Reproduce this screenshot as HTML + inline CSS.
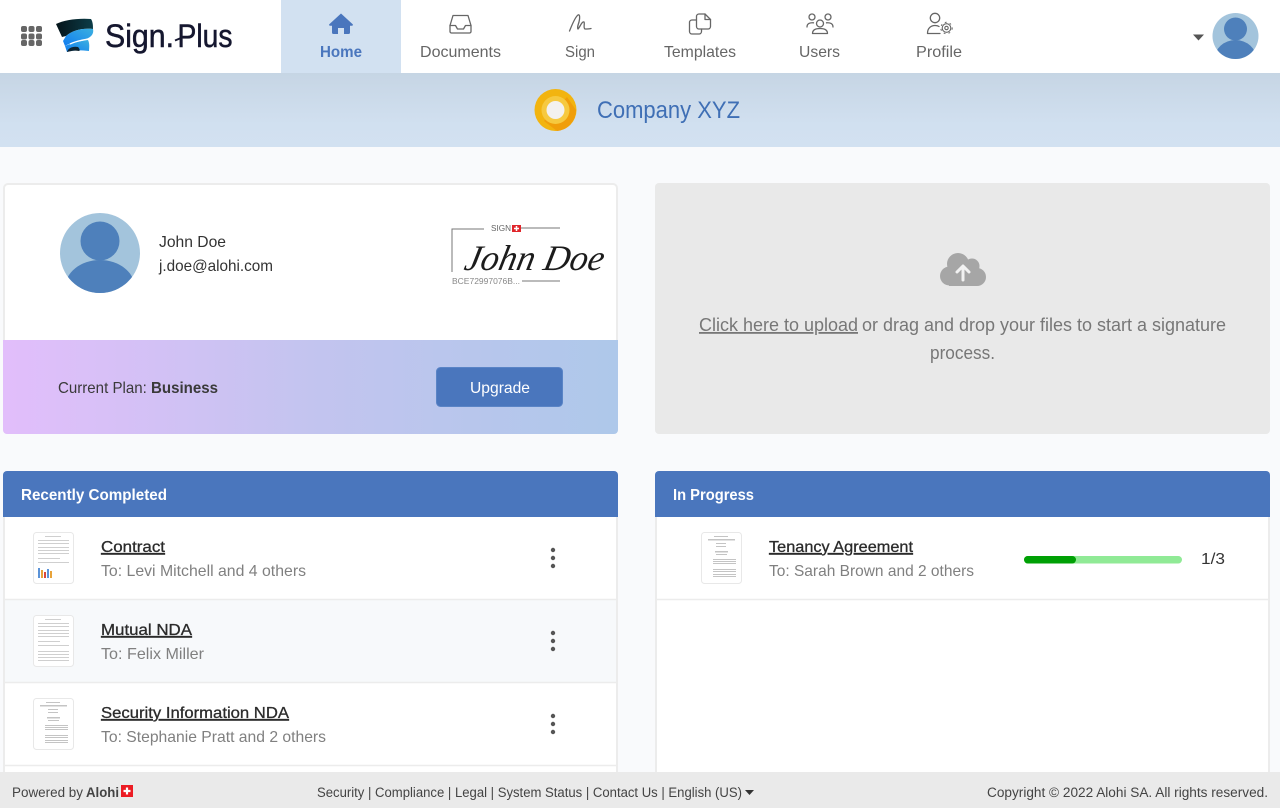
<!DOCTYPE html>
<html><head><meta charset="utf-8"><title>Sign.Plus</title>
<style>
html,body{margin:0;padding:0;background:#f9fafc;width:1280px;height:808px;overflow:hidden}
svg{display:block;font-family:"Liberation Sans",sans-serif}
text{white-space:pre}
.nav{font-size:16px;fill:#666}
.t{font-size:16px;fill:#333}
.s{font-size:16px;fill:#808080}
.l{font-size:16px;fill:#2b2b2b;stroke:#2b2b2b;stroke-width:.3;text-decoration:underline}
.f{font-size:13.5px;fill:#444}
.ic{fill:none;stroke:#666;stroke-width:1.3;stroke-linecap:round;stroke-linejoin:round}
</style></head><body>
<svg width="1280" height="808" viewBox="0 0 1280 808" xmlns="http://www.w3.org/2000/svg">
<defs>
<linearGradient id="band" x1="0" y1="0" x2="0" y2="1"><stop offset="0" stop-color="#c6d5e4"/><stop offset=".7" stop-color="#d1e0f0"/><stop offset="1" stop-color="#d2e1f1"/></linearGradient>
<linearGradient id="plan" x1="0" y1="0" x2="1" y2="0"><stop offset="0" stop-color="#e2befb"/><stop offset=".5" stop-color="#c3c4ef"/><stop offset="1" stop-color="#aec8ea"/></linearGradient>
<linearGradient id="ld" x1="0" y1="0" x2="1" y2="0"><stop offset="0" stop-color="#05141a"/><stop offset="1" stop-color="#0c3d48"/></linearGradient>
<linearGradient id="lb" x1="0" y1="1" x2="1" y2="0"><stop offset="0" stop-color="#0f7cf0"/><stop offset="1" stop-color="#3cb0e0"/></linearGradient>
<clipPath id="av"><circle cx="100" cy="253" r="40"/></clipPath>
<clipPath id="av2"><circle cx="1235.5" cy="36" r="23"/></clipPath>
<g id="thumb">
<rect x=".5" y=".5" width="40" height="51" rx="3" fill="#fff" stroke="#e8e8e8"/>
<g fill="#cfcfcf"><rect x="12" y="4" width="16" height="1"/><rect x="5" y="8" width="31" height="1"/><rect x="5" y="11" width="31" height="1"/><rect x="5" y="15" width="31" height="1"/><rect x="5" y="18" width="31" height="1"/><rect x="5" y="21" width="31" height="1"/><rect x="5" y="26" width="22" height="1"/><rect x="5" y="30" width="31" height="1"/></g>
</g>
<g id="thumb2">
<rect x=".5" y=".5" width="40" height="51" rx="3" fill="#fff" stroke="#e8e8e8"/>
<g fill="#c4c4c4"><rect x="13" y="4" width="14" height="1"/><rect x="7" y="7" width="27" height="1.5"/><rect x="15" y="11" width="10" height="1"/><rect x="15" y="14" width="10" height="1"/><rect x="14" y="19" width="13" height="1.5"/><rect x="15" y="22" width="11" height="1"/><rect x="12" y="27" width="23" height="1"/><rect x="12" y="29" width="23" height="1"/><rect x="12" y="31" width="23" height="1"/><rect x="12" y="37" width="23" height="1"/><rect x="12" y="39" width="23" height="1"/><rect x="12" y="42" width="23" height="1"/><rect x="12" y="44" width="23" height="1"/></g>
</g>
</defs>

<rect width="1280" height="808" fill="#f9fafc"/>
<!-- header -->
<rect width="1280" height="73" fill="#fff"/>
<rect x="281" width="120" height="73" fill="#d2e1f1"/>
<rect y="73" width="1280" height="74" fill="url(#band)"/>

<!-- grid icon -->
<g fill="#666"><rect x="21" y="26" width="6" height="6" rx="2"/><rect x="28.5" y="26" width="6" height="6" rx="2"/><rect x="36" y="26" width="6" height="6" rx="2"/><rect x="21" y="33.5" width="6" height="6" rx="2"/><rect x="28.5" y="33.5" width="6" height="6" rx="2"/><rect x="36" y="33.5" width="6" height="6" rx="2"/><rect x="21" y="40" width="6" height="6" rx="2"/><rect x="28.5" y="40" width="6" height="6" rx="2"/><rect x="36" y="40" width="6" height="6" rx="2"/></g>
<!-- logo -->
<path d="M56 24C64 20 78 18 91 19C93 22 93 26 93 29C82 28 73 30 66 36L62 37Z" fill="url(#ld)"/>
<path d="M66 36C73 30 82 28 93 29C94 33 92 37 86 39C78 41 70 43 65 46L63 41Z" fill="url(#lb)"/>
<path d="M65 46C72 43 80 41 88 40C90 44 89 48 89 51C80 50 73 50 67 52Z" fill="url(#lb)"/>
<path d="M67 52C68 48 73 46 78 47C80 49 80 51 79 51C74 50 71 51 67 52Z" fill="#0d2430"/>
<path d="M70 44C76 41 82 40 88 39" fill="none" stroke="#fff" stroke-width="1.300"/>
<text x="105" y="47" font-size="32" fill="#15172f" stroke="#15172f" stroke-width=".5" textLength="69" lengthAdjust="spacingAndGlyphs">Sign.</text>
<text x="177.500" y="47" font-size="32" fill="#15172f" stroke="#15172f" stroke-width=".5" textLength="55" lengthAdjust="spacingAndGlyphs">Plus</text>
<path d="M175 40.500L181 38" stroke="#15172f" stroke-width="2" fill="none"/>

<!-- nav icons -->
<path d="M341 13.5L329.3 24.2a.9.9 0 0 0 .6 1.5H332V32.5a1.5 1.5 0 0 0 1.5 1.5H338V28h6v6h4.5a1.5 1.5 0 0 0 1.5-1.5V25.7h2.1a.9.9 0 0 0 .6-1.5Z" fill="#4a76bd"/>
<text x="320" y="57" font-size="16" font-weight="bold" fill="#4a76bd" textLength="42" lengthAdjust="spacingAndGlyphs">Home</text>
<g class="ic"><path d="M453 15.500h15l3 10v6a1.500 1.500 0 0 1-1.500 1.500h-18a1.500 1.500 0 0 1-1.500-1.500v-6Z"/><path d="M450 25.500h5.500l2 3.500h6l2-3.500h5.500"/></g>
<text class="nav" x="420" y="57" textLength="81" lengthAdjust="spacingAndGlyphs">Documents</text>
<path class="ic" d="M569.500 31C572 25 575 17 578 15C580 14 580 18 579 22C578 25 577 28 578 29C580 27 582 21 584 22C585 23 583 28 585 29C587 29 589 29 591 28.500"/>
<text class="nav" x="565" y="57" textLength="30" lengthAdjust="spacingAndGlyphs">Sign</text>
<g class="ic"><path d="M696 20h-4a2.500 2.500 0 0 0-2.500 2.500V31.500a2.500 2.500 0 0 0 2.500 2.500h7a2.500 2.500 0 0 0 2.500-2.500V29"/><path d="M699 14h6l5.500 5.500V26.500a2.500 2.500 0 0 1-2.500 2.500h-9a2.500 2.500 0 0 1-2.500-2.500V16.500a2.500 2.500 0 0 1 2.500-2.500Z"/><path d="M705 14v5.500h5.500"/></g>
<text class="nav" x="664" y="57" textLength="72" lengthAdjust="spacingAndGlyphs">Templates</text>
<g class="ic"><circle cx="812" cy="17" r="3"/><circle cx="828" cy="17" r="3"/><circle cx="820" cy="23.500" r="3.500"/><path d="M807 27C807 23.500 810 22.500 813.500 22.800M833 27C833 23.500 830 22.500 826.500 22.800"/><path d="M812.500 33.500C812.500 29.500 816 28.500 820 28.500S827.500 29.500 827.500 33.500Z"/></g>
<text class="nav" x="799" y="57" textLength="41" lengthAdjust="spacingAndGlyphs">Users</text>
<g class="ic"><circle cx="935" cy="18" r="4.700"/><path d="M927.500 33.500C927.500 28 931 25.500 935 25.500C936.500 25.500 938 25.800 939 26.500M927.500 33.500H940"/><circle cx="946.500" cy="28" r="4.300" stroke-width="1.100"/><circle cx="946.500" cy="28" r="5.700" stroke-width="1" stroke-dasharray="1.800 3.200" stroke-linecap="butt"/><circle cx="946.500" cy="28" r="1.700" stroke-width="1.100"/></g>
<text class="nav" x="916" y="57" textLength="46" lengthAdjust="spacingAndGlyphs">Profile</text>

<!-- top right -->
<path d="M1193 34.500h11l-5.500 6Z" fill="#555"/>
<circle cx="1235.500" cy="36" r="23" fill="#a3c4dc"/>
<g clip-path="url(#av2)" fill="#4e80bb"><circle cx="1235.500" cy="29" r="11.500"/><ellipse cx="1235.500" cy="59" rx="21" ry="19"/></g>

<!-- company -->
<circle cx="555.500" cy="110" r="21" fill="#f2b40f"/>
<path d="M567 97L576 110A21 21 0 0 1 557 131L544 121Z" fill="#f09e0a"/>
<circle cx="555.500" cy="110" r="14" fill="#f6c93f"/>
<circle cx="555.500" cy="110" r="9" fill="#f3f1ee"/>
<text x="597" y="118" font-size="24" fill="#3f6fb5" textLength="143" lengthAdjust="spacingAndGlyphs">Company XYZ</text>

<!-- profile card -->
<rect x="4" y="184" width="613" height="249" rx="4" fill="#fff" stroke="#ececec" stroke-width="2"/>
<circle cx="100" cy="253" r="40" fill="#a3c4dc"/>
<g clip-path="url(#av)" fill="#4e80bb"><circle cx="100" cy="241" r="19.500"/><ellipse cx="100" cy="288" rx="35" ry="28"/></g>
<text class="t" x="159" y="247" textLength="67" lengthAdjust="spacingAndGlyphs">John Doe</text>
<text class="t" x="159" y="271" textLength="114" lengthAdjust="spacingAndGlyphs">j.doe@alohi.com</text>

<!-- signature -->
<path d="M452 272V229H484M521 228H560M522 281H560" fill="none" stroke="#777" stroke-width="1"/>
<text x="491" y="231" font-size="8" fill="#666" textLength="20" lengthAdjust="spacingAndGlyphs">SIGN</text>
<rect x="512" y="225" width="9" height="7" fill="#e0262b"/><path d="M516.500 226v5M514 228.500h5" stroke="#fff" stroke-width="1.500"/>
<text x="452" y="284" font-size="8" fill="#888" textLength="68" lengthAdjust="spacingAndGlyphs">BCE72997076B...</text>
<text transform="translate(463 270) skewX(-12)" x="0" y="0" font-family="Liberation Serif,serif" font-style="italic" font-size="36" fill="#1c1c1c" textLength="139" lengthAdjust="spacingAndGlyphs">John Doe</text>

<!-- plan -->
<path d="M3 340H618V430a4 4 0 0 1-4 4H7a4 4 0 0 1-4-4Z" fill="url(#plan)"/>
<text x="58" y="393" font-size="16" fill="#3a3a3a" textLength="160" lengthAdjust="spacingAndGlyphs">Current Plan: <tspan font-weight="bold">Business</tspan></text>
<rect x="436.500" y="367.500" width="126" height="39" rx="4" fill="#4a76bd" stroke="#5a84c6"/>
<text x="470" y="393" font-size="16" fill="#fff" textLength="60" lengthAdjust="spacingAndGlyphs">Upgrade</text>

<!-- upload -->
<rect x="655" y="183" width="615" height="251" rx="4" fill="#e9e9e9"/>
<g fill="#a6a6a6"><circle cx="958" cy="264" r="11"/><circle cx="972" cy="266" r="7.500"/><circle cx="949.500" cy="276" r="9.500"/><circle cx="977" cy="277" r="9"/><rect x="949" y="268" width="28" height="18"/></g>
<path d="M963 280V266.500M957 272L963 266L969 272" fill="none" stroke="#f2f2f2" stroke-width="3" stroke-linecap="round" stroke-linejoin="round"/>
<text x="699" y="331" font-size="18" fill="#777" text-decoration="underline" textLength="159" lengthAdjust="spacingAndGlyphs">Click here to upload</text>
<text x="862" y="331" font-size="18" fill="#777" textLength="364" lengthAdjust="spacingAndGlyphs">or drag and drop your files to start a signature</text>
<text x="930" y="359" font-size="18" fill="#777" textLength="65" lengthAdjust="spacingAndGlyphs">process.</text>

<!-- left list -->
<rect x="4" y="480" width="613" height="310" fill="#fff" stroke="#ececec" stroke-width="2"/>
<rect x="5" y="600" width="611" height="82" fill="#f7f9fb"/>
<path d="M5 599.500H616M5 682.500H616M5 765.500H616" stroke="#ececec" stroke-width="1.500"/>
<path d="M3 517V475a4 4 0 0 1 4-4H614a4 4 0 0 1 4 4V517Z" fill="#4a76bd"/>
<text x="21" y="500" font-size="16" font-weight="bold" fill="#fff" textLength="146" lengthAdjust="spacingAndGlyphs">Recently Completed</text>

<use href="#thumb" x="33" y="532"/>
<g><rect x="38" y="568" width="2" height="10" fill="#5b93d8"/><rect x="41" y="570" width="2" height="8" fill="#e8a33a"/><rect x="44" y="572" width="2" height="6" fill="#d9483b"/><rect x="47" y="569" width="2" height="9" fill="#5b93d8"/><rect x="50" y="571" width="2" height="7" fill="#e8a33a"/></g>
<text class="l" x="101" y="552" textLength="64" lengthAdjust="spacingAndGlyphs">Contract</text>
<text class="s" x="101" y="576" textLength="205" lengthAdjust="spacingAndGlyphs">To: Levi Mitchell and 4 others</text>

<use href="#thumb" x="33" y="615"/>
<g fill="#cfcfcf"><rect x="38" y="651" width="31" height="1"/><rect x="38" y="654" width="31" height="1"/><rect x="38" y="657" width="31" height="1"/><rect x="38" y="660" width="31" height="1"/></g>
<text class="l" x="101" y="635" textLength="91" lengthAdjust="spacingAndGlyphs">Mutual NDA</text>
<text class="s" x="101" y="659" textLength="103" lengthAdjust="spacingAndGlyphs">To: Felix Miller</text>

<use href="#thumb2" x="33" y="698"/>
<text class="l" x="101" y="718" textLength="188" lengthAdjust="spacingAndGlyphs">Security Information NDA</text>
<text class="s" x="101" y="742" textLength="225" lengthAdjust="spacingAndGlyphs">To: Stephanie Pratt and 2 others</text>

<g fill="#555"><circle cx="553" cy="550" r="2.200"/><circle cx="553" cy="558" r="2.200"/><circle cx="553" cy="566" r="2.200"/><circle cx="553" cy="633" r="2.200"/><circle cx="553" cy="641" r="2.200"/><circle cx="553" cy="649" r="2.200"/><circle cx="553" cy="716" r="2.200"/><circle cx="553" cy="724" r="2.200"/><circle cx="553" cy="732" r="2.200"/></g>

<!-- right list -->
<rect x="656" y="480" width="613" height="310" fill="#fff" stroke="#ececec" stroke-width="2"/>
<path d="M657 599.500H1268" stroke="#ececec" stroke-width="1.500"/>
<path d="M655 517V475a4 4 0 0 1 4-4H1266a4 4 0 0 1 4 4V517Z" fill="#4a76bd"/>
<text x="673" y="500" font-size="16" font-weight="bold" fill="#fff" textLength="81" lengthAdjust="spacingAndGlyphs">In Progress</text>
<use href="#thumb2" x="701" y="532"/>
<text class="l" x="769" y="552" textLength="144" lengthAdjust="spacingAndGlyphs">Tenancy Agreement</text>
<text class="s" x="769" y="576" textLength="205" lengthAdjust="spacingAndGlyphs">To: Sarah Brown and 2 others</text>
<rect x="1024" y="556" width="158" height="7.500" rx="3.700" fill="#90ea96"/>
<rect x="1024" y="556" width="52" height="7.500" rx="3.700" fill="#00a005"/>
<text class="t" x="1201" y="564" textLength="24" lengthAdjust="spacingAndGlyphs">1/3</text>

<!-- footer -->
<rect y="772" width="1280" height="36" fill="#eaeaea"/>
<text class="f" x="12" y="797" textLength="71" lengthAdjust="spacingAndGlyphs">Powered by</text>
<text class="f" x="86" y="797" font-weight="bold" textLength="33" lengthAdjust="spacingAndGlyphs">Alohi</text>
<rect x="121" y="785" width="12" height="12" fill="#ec1c24"/><path d="M127 787.500v7M123.500 791h7" stroke="#fff" stroke-width="2.200"/>
<text class="f" x="317" y="797" textLength="425" lengthAdjust="spacingAndGlyphs">Security | Compliance | Legal | System Status | Contact Us | English (US)</text>
<path d="M745 790h9l-4.500 5Z" fill="#333"/>
<text class="f" x="987" y="797" textLength="281" lengthAdjust="spacingAndGlyphs">Copyright © 2022 Alohi SA. All rights reserved.</text>
</svg>
</body></html>
